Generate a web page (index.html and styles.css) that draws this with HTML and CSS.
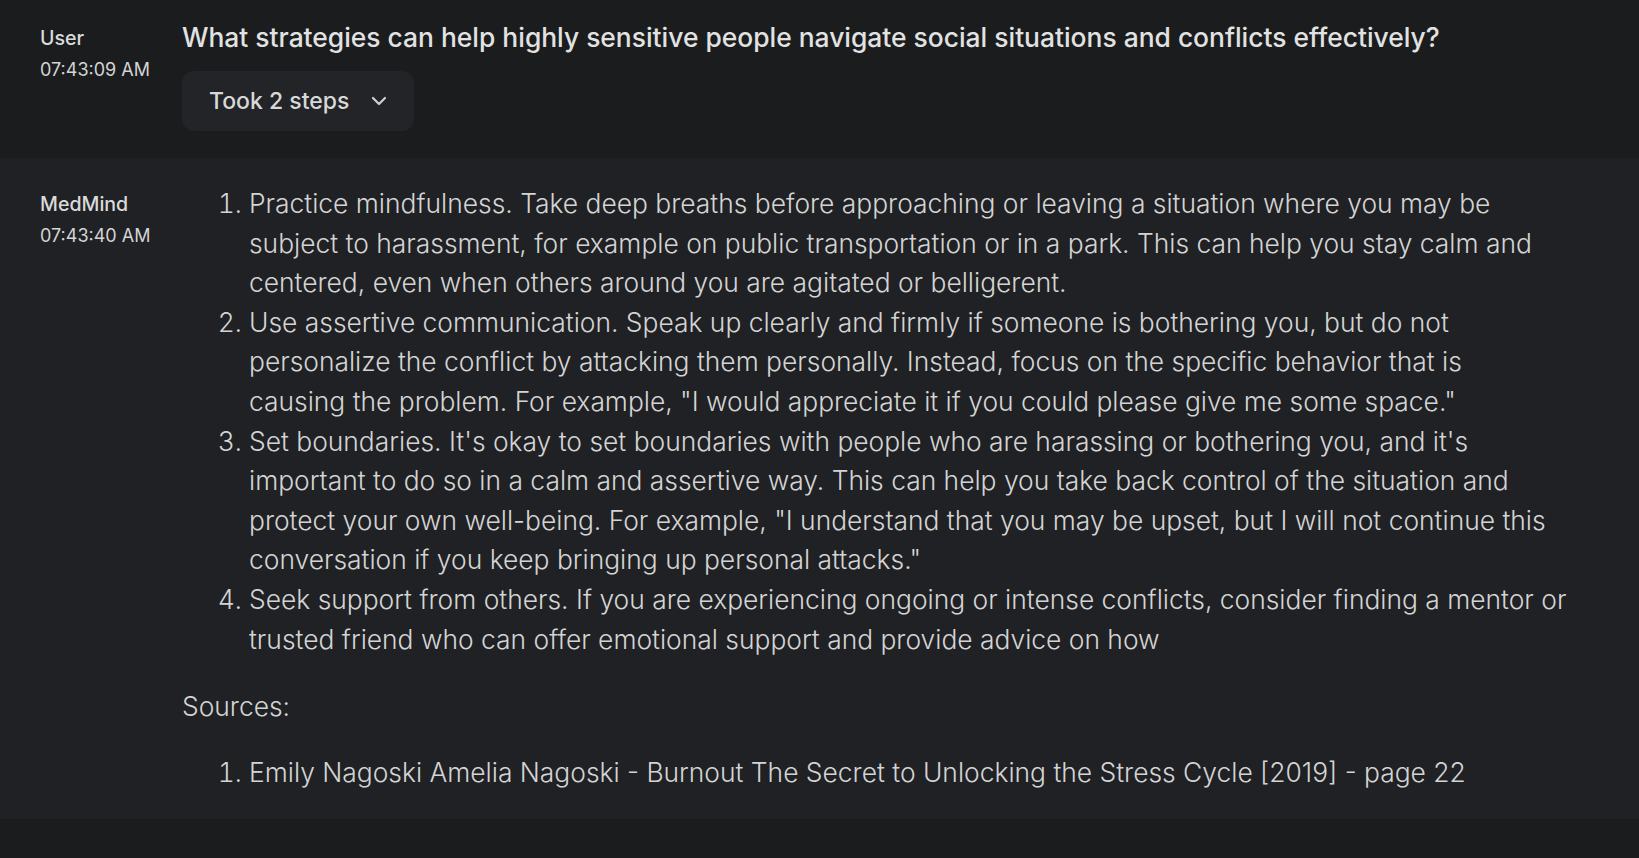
FILE: index.html
```html
<!DOCTYPE html>
<html lang="en">
<head>
<meta charset="utf-8">
<title>MedMind chat</title>
<link rel="stylesheet" href="styles.css">
</head>
<body>
<div class="chat">
  <section class="msg msg-user">
    <div class="meta">
      <div class="author">User</div>
      <div class="time">07:43:09 AM</div>
    </div>
    <div class="content">
      <div class="question">What strategies can help highly sensitive people navigate social situations and conflicts effectively?</div>
      <button class="steps" type="button">
        <span>Took 2 steps</span>
        <svg class="chev" width="16" height="10" viewBox="0 0 16 10" aria-hidden="true"><path d="M2 2l6 6 6-6" fill="none" stroke="currentColor" stroke-width="2.2" stroke-linecap="round" stroke-linejoin="round"/></svg>
      </button>
    </div>
  </section>
  <section class="msg msg-bot">
    <div class="meta">
      <div class="author">MedMind</div>
      <div class="time">07:43:40 AM</div>
    </div>
    <div class="content answer">
      <ol class="list">
        <li>Practice mindfulness. Take deep breaths before approaching or leaving a situation where you may be subject to harassment, for example on public transportation or in a park. This can help you stay calm and centered, even when others around you are agitated or belligerent.</li>
        <li>Use assertive communication. Speak up clearly and firmly if someone is bothering you, but do not personalize the conflict by attacking them personally. Instead, focus on the specific behavior that is<br>causing the problem. For example, "I would appreciate it if you could please give me some space."</li>
        <li>Set boundaries. It's okay to set boundaries with people who are harassing or bothering you, and it's important to do so in a calm and assertive way. This can help you take back control of the situation and protect your own well-being. For example, "I understand that you may be upset, but I will not continue this conversation if you keep bringing up personal attacks."</li>
        <li>Seek support from others. If you are experiencing ongoing or intense conflicts, consider finding a mentor or trusted friend who can offer emotional support and provide advice on how</li>
      </ol>
      <p class="sources">Sources:</p>
      <ol class="list">
        <li>Emily Nagoski Amelia Nagoski - Burnout The Secret to Unlocking the Stress Cycle [2019] - page 22</li>
      </ol>
    </div>
  </section>
</div>
</body>
</html>
```
FILE: styles.css
```css
html, body {
  margin: 0;
  padding: 0;
  background: #1b1c1e;
}

body {
  font-family: Inter, "Noto Sans", sans-serif;
  color: #d6d6d6;
  height: 858px;
  overflow: hidden;
}

.msg {
  display: flex;
  padding: 0 40px;
}

.msg-user {
  padding-top: 18px;
  padding-bottom: 27px;
}

.msg-bot {
  background: #202124;
  padding-top: 26px;
  padding-bottom: 26px;
}

.meta {
  flex: 0 0 142px;
  padding-top: 4px;
}

.author {
  font-size: 19.6px;
  font-weight: 500;
  line-height: 32px;
  color: #dadada;
}

.time {
  font-size: 18px;
  line-height: 32px;
  color: #d4d4d4;
}

.msg-bot .meta {
  padding-top: 4px;
}

.content {
  flex: 1 1 auto;
  min-width: 0;
}

.question {
  font-size: 26.4px;
  font-weight: 500;
  line-height: 38px;
  color: #e2e2e2;
}

.steps {
  display: inline-flex;
  align-items: center;
  gap: 22px;
  margin-top: 15px;
  height: 60px;
  padding: 0 27px 0 27px;
  background: #232427;
  border: 0;
  border-radius: 12px;
  font-family: inherit;
  font-size: 23px;
  font-weight: 500;
  color: #d8d8d8;
}

.chev {
  display: block;
  color: #d0d0d0;
}

.answer {
  font-size: 26.4px;
  font-weight: 300;
  line-height: 1.5;
  color: #d4d4d4;
  padding-right: 20px;
}

.list {
  margin: 0;
  padding-left: 67px;
}

.sources {
  margin: 28px 0 26px;
}
```
